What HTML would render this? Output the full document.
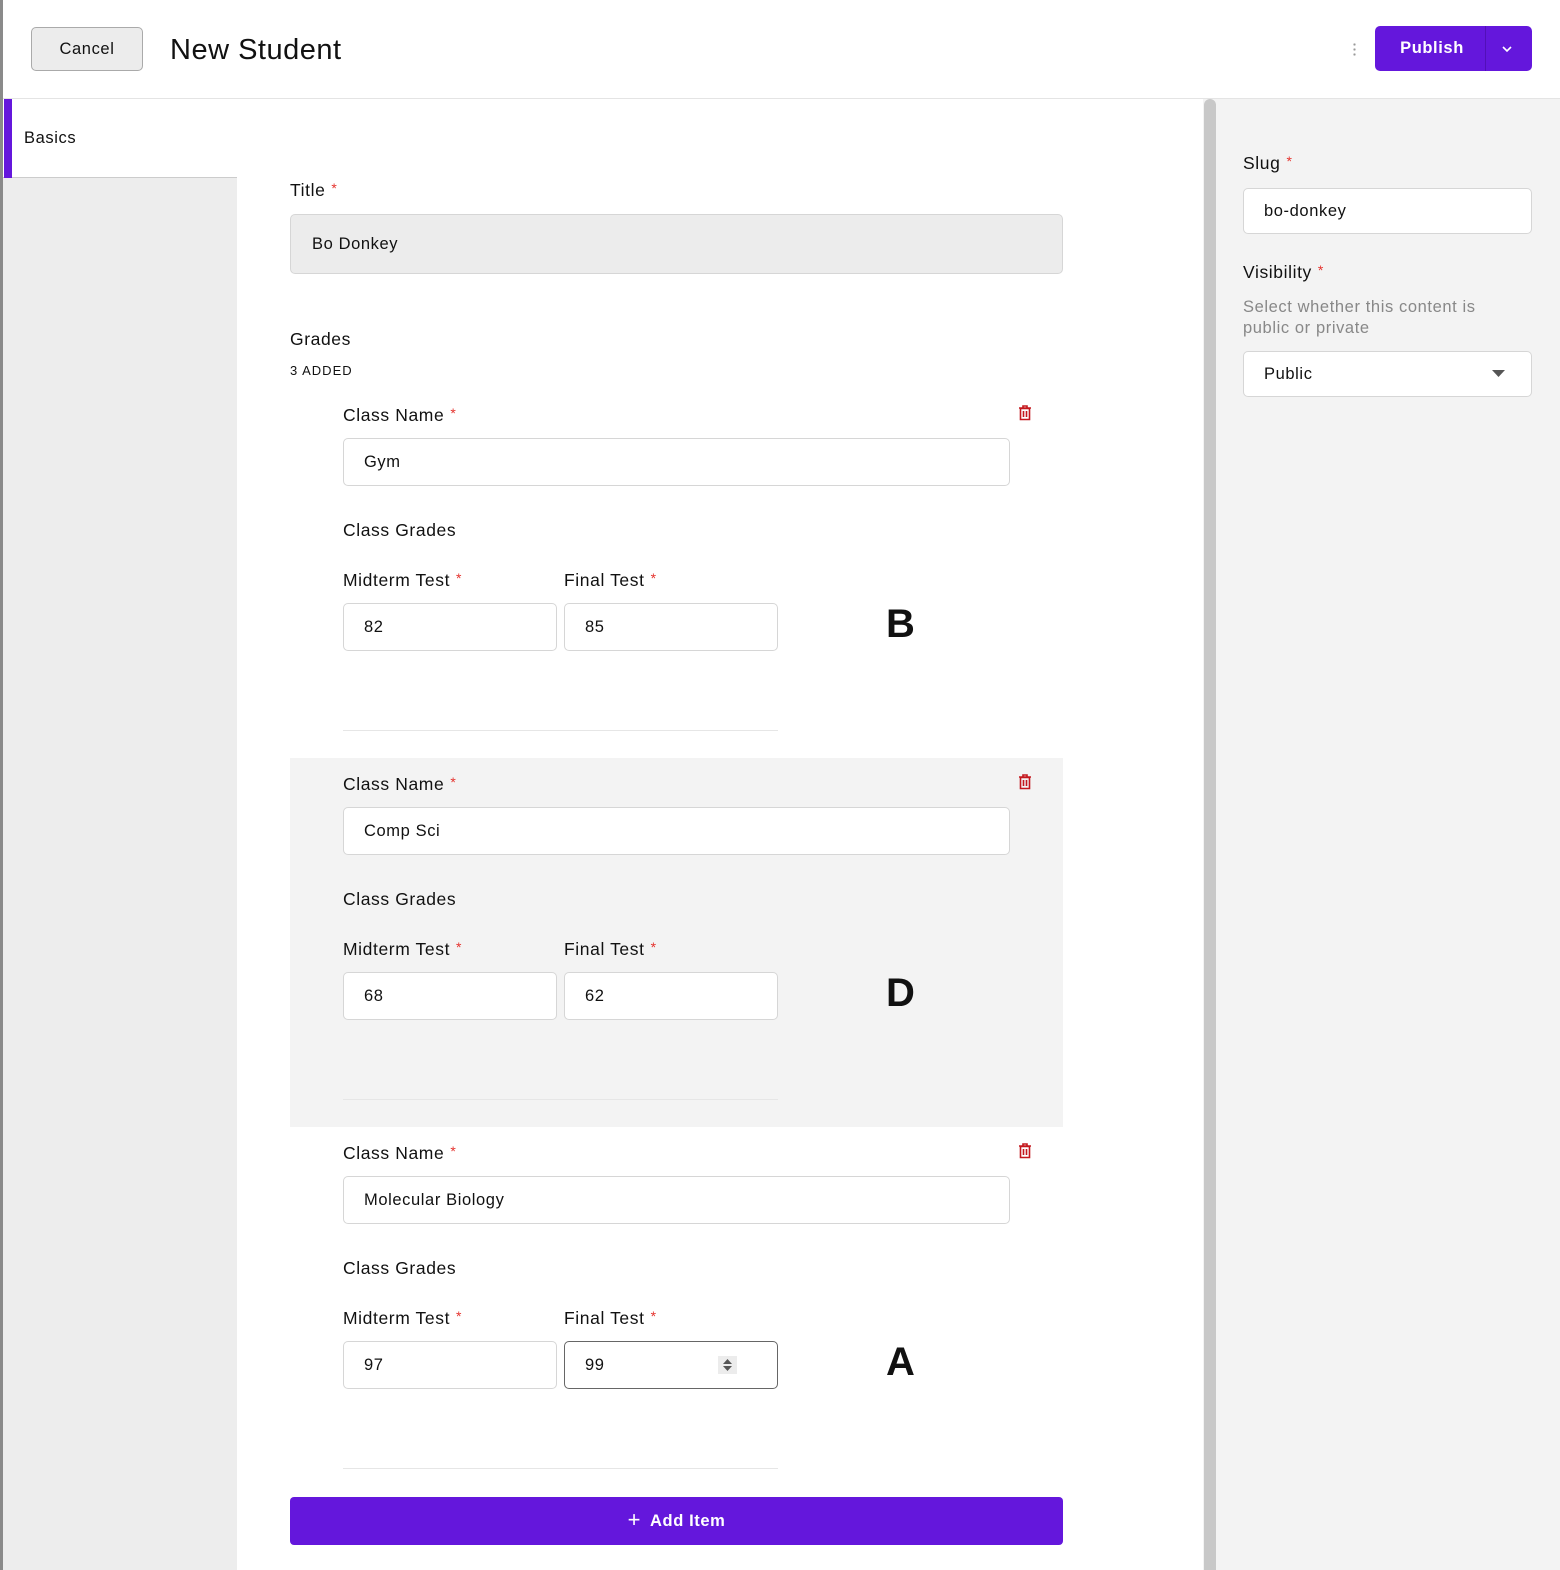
<!DOCTYPE html>
<html><head><style>
*{box-sizing:border-box;margin:0;padding:0}
body{width:1560px;height:1570px;position:relative;overflow:hidden;background:#fff;font-family:"Liberation Sans",sans-serif;color:#111;letter-spacing:0.6px}
.a{position:absolute}
.lbl{position:absolute;font-size:17.5px;color:#111;white-space:nowrap}
.req{color:#e5322d;font-size:14px;vertical-align:top;margin-left:6px}
.inp{position:absolute;background:#fff;border:1px solid #d6d6d6;border-radius:5px;font-size:16.5px;padding-left:20px;display:flex;align-items:center;white-space:nowrap}
.big{position:absolute;font-size:40px;font-weight:bold;font-family:"Liberation Sans",sans-serif}
</style></head><body>
<div class="a" style="left:0;top:0;width:3px;height:1570px;background:#8a8a8a"></div>
<!-- header -->
<div class="a" style="left:31px;top:27px;width:112px;height:44px;background:#ececec;border:1px solid #aaa;border-radius:5px;font-size:16.5px;display:flex;align-items:center;justify-content:center">Cancel</div>
<div class="a" style="left:170px;top:34px;font-size:29px;letter-spacing:0.5px;white-space:nowrap">New Student</div>
<div class="a" style="left:1353px;top:42px;width:3px;height:14px;background:radial-gradient(circle,#999 1px,transparent 1.3px) 0 0/3px 5px"></div>
<div class="a" style="left:1375px;top:26px;width:157px;height:45px;background:#6417dc;border-radius:5px"></div>
<div class="a" style="left:1378px;top:26px;width:108px;height:45px;color:#fff;font-weight:bold;font-size:16.5px;display:flex;align-items:center;justify-content:center">Publish</div>
<div class="a" style="left:1485px;top:26px;width:1px;height:45px;background:#5210b8"></div>
<svg class="a" style="left:1501px;top:44px" width="12" height="10"><path d="M2 3l4 4 4-4" stroke="#fff" stroke-width="1.6" fill="none"/></svg>
<div class="a" style="left:3px;top:98px;width:1557px;height:1px;background:#e4e4e4"></div>
<!-- sidebar -->
<div class="a" style="left:3px;top:99px;width:234px;height:1471px;background:#ededed"></div>
<div class="a" style="left:3px;top:99px;width:234px;height:79px;background:#fff;border-bottom:1px solid #ccc"></div>
<div class="a" style="left:4px;top:99px;width:8px;height:79px;background:#6417dc"></div>
<div class="a" style="left:24px;top:129px;font-size:16.5px">Basics</div>
<!-- right panel -->
<div class="a" style="left:1203px;top:99px;width:357px;height:1471px;background:#f3f3f3"></div>
<div class="a" style="left:1204px;top:99px;width:12px;height:1471px;background:#c8c8c8;border-radius:6px 6px 0 0"></div>
<div class="lbl" style="left:1243px;top:153px">Slug<span class="req">*</span></div>
<div class="inp" style="left:1243px;top:188px;width:289px;height:46px">bo-donkey</div>
<div class="lbl" style="left:1243px;top:262px">Visibility<span class="req">*</span></div>
<div class="a" style="left:1243px;top:297px;font-size:16.5px;color:#888;line-height:21px">Select whether this content is<br>public or private</div>
<div class="inp" style="left:1243px;top:351px;width:289px;height:46px">Public</div>
<svg class="a" style="left:1492px;top:370px" width="13" height="8"><path d="M0 0h13L6.5 7z" fill="#555"/></svg>
<!-- main -->
<div class="lbl" style="left:290px;top:180px">Title<span class="req">*</span></div>
<div class="inp" style="left:290px;top:214px;width:773px;height:60px;background:#ececec;padding-left:21px">Bo Donkey</div>
<div class="lbl" style="left:290px;top:329px">Grades</div>
<div class="a" style="left:290px;top:363px;font-size:13px;letter-spacing:1px">3 ADDED</div>
<div class="a" style="left:290px;top:758px;width:773px;height:369px;background:#f3f3f3"></div>

<div class="a" style="left:0;top:0">
 <div class="lbl" style="left:343px;top:405px">Class Name<span class="req">*</span></div>
 <svg class="a" style="left:1018px;top:405px" width="14" height="16"><path d="M1 3h12M5 3V1h4v2M2.5 3.5h9v11h-9z M5.5 6v6M8.5 6v6" stroke="#c4181e" stroke-width="1.6" fill="none"/></svg>
 <div class="inp" style="left:343px;top:438px;width:667px;height:48px">Gym</div>
 <div class="lbl" style="left:343px;top:520px">Class Grades</div>
 <div class="lbl" style="left:343px;top:570px">Midterm Test<span class="req">*</span></div>
 <div class="lbl" style="left:564px;top:570px">Final Test<span class="req">*</span></div>
 <div class="inp" style="left:343px;top:603px;width:214px;height:48px">82</div>
 <div class="inp" style="left:564px;top:603px;width:214px;height:48px">85</div>
 <div class="big" style="left:886px;top:602px">B</div>
 <div class="a" style="left:343px;top:730px;width:435px;height:1px;background:#e6e6e6"></div>
</div>
<div class="a" style="left:0;top:369px">
 <div class="lbl" style="left:343px;top:405px">Class Name<span class="req">*</span></div>
 <svg class="a" style="left:1018px;top:405px" width="14" height="16"><path d="M1 3h12M5 3V1h4v2M2.5 3.5h9v11h-9z M5.5 6v6M8.5 6v6" stroke="#c4181e" stroke-width="1.6" fill="none"/></svg>
 <div class="inp" style="left:343px;top:438px;width:667px;height:48px">Comp Sci</div>
 <div class="lbl" style="left:343px;top:520px">Class Grades</div>
 <div class="lbl" style="left:343px;top:570px">Midterm Test<span class="req">*</span></div>
 <div class="lbl" style="left:564px;top:570px">Final Test<span class="req">*</span></div>
 <div class="inp" style="left:343px;top:603px;width:214px;height:48px">68</div>
 <div class="inp" style="left:564px;top:603px;width:214px;height:48px">62</div>
 <div class="big" style="left:886px;top:602px">D</div>
 <div class="a" style="left:343px;top:730px;width:435px;height:1px;background:#e6e6e6"></div>
</div>
<div class="a" style="left:0;top:738px">
 <div class="lbl" style="left:343px;top:405px">Class Name<span class="req">*</span></div>
 <svg class="a" style="left:1018px;top:405px" width="14" height="16"><path d="M1 3h12M5 3V1h4v2M2.5 3.5h9v11h-9z M5.5 6v6M8.5 6v6" stroke="#c4181e" stroke-width="1.6" fill="none"/></svg>
 <div class="inp" style="left:343px;top:438px;width:667px;height:48px">Molecular Biology</div>
 <div class="lbl" style="left:343px;top:520px">Class Grades</div>
 <div class="lbl" style="left:343px;top:570px">Midterm Test<span class="req">*</span></div>
 <div class="lbl" style="left:564px;top:570px">Final Test<span class="req">*</span></div>
 <div class="inp" style="left:343px;top:603px;width:214px;height:48px">97</div>
 <div class="inp" style="left:564px;top:603px;width:214px;height:48px;border:1.5px solid #666">99</div>
 <div class="a" style="left:718px;top:618px;width:19px;height:18px;background:#ececec"></div>
 <svg class="a" style="left:722px;top:620px" width="11" height="14"><path d="M1 6L5.5 1 10 6zM1 8l4.5 5L10 8z" fill="#555"/></svg>
 <div class="big" style="left:886px;top:602px">A</div>
 <div class="a" style="left:343px;top:730px;width:435px;height:1px;background:#e6e6e6"></div>
</div>
<div class="a" style="left:290px;top:1497px;width:773px;height:48px;background:#6417dc;border-radius:4px;color:#fff;font-size:16.5px;font-weight:bold;display:flex;align-items:center;justify-content:center"><span style="font-weight:normal;font-size:22px;margin-right:9px;margin-top:-3px">+</span>Add Item</div>
</body></html>
